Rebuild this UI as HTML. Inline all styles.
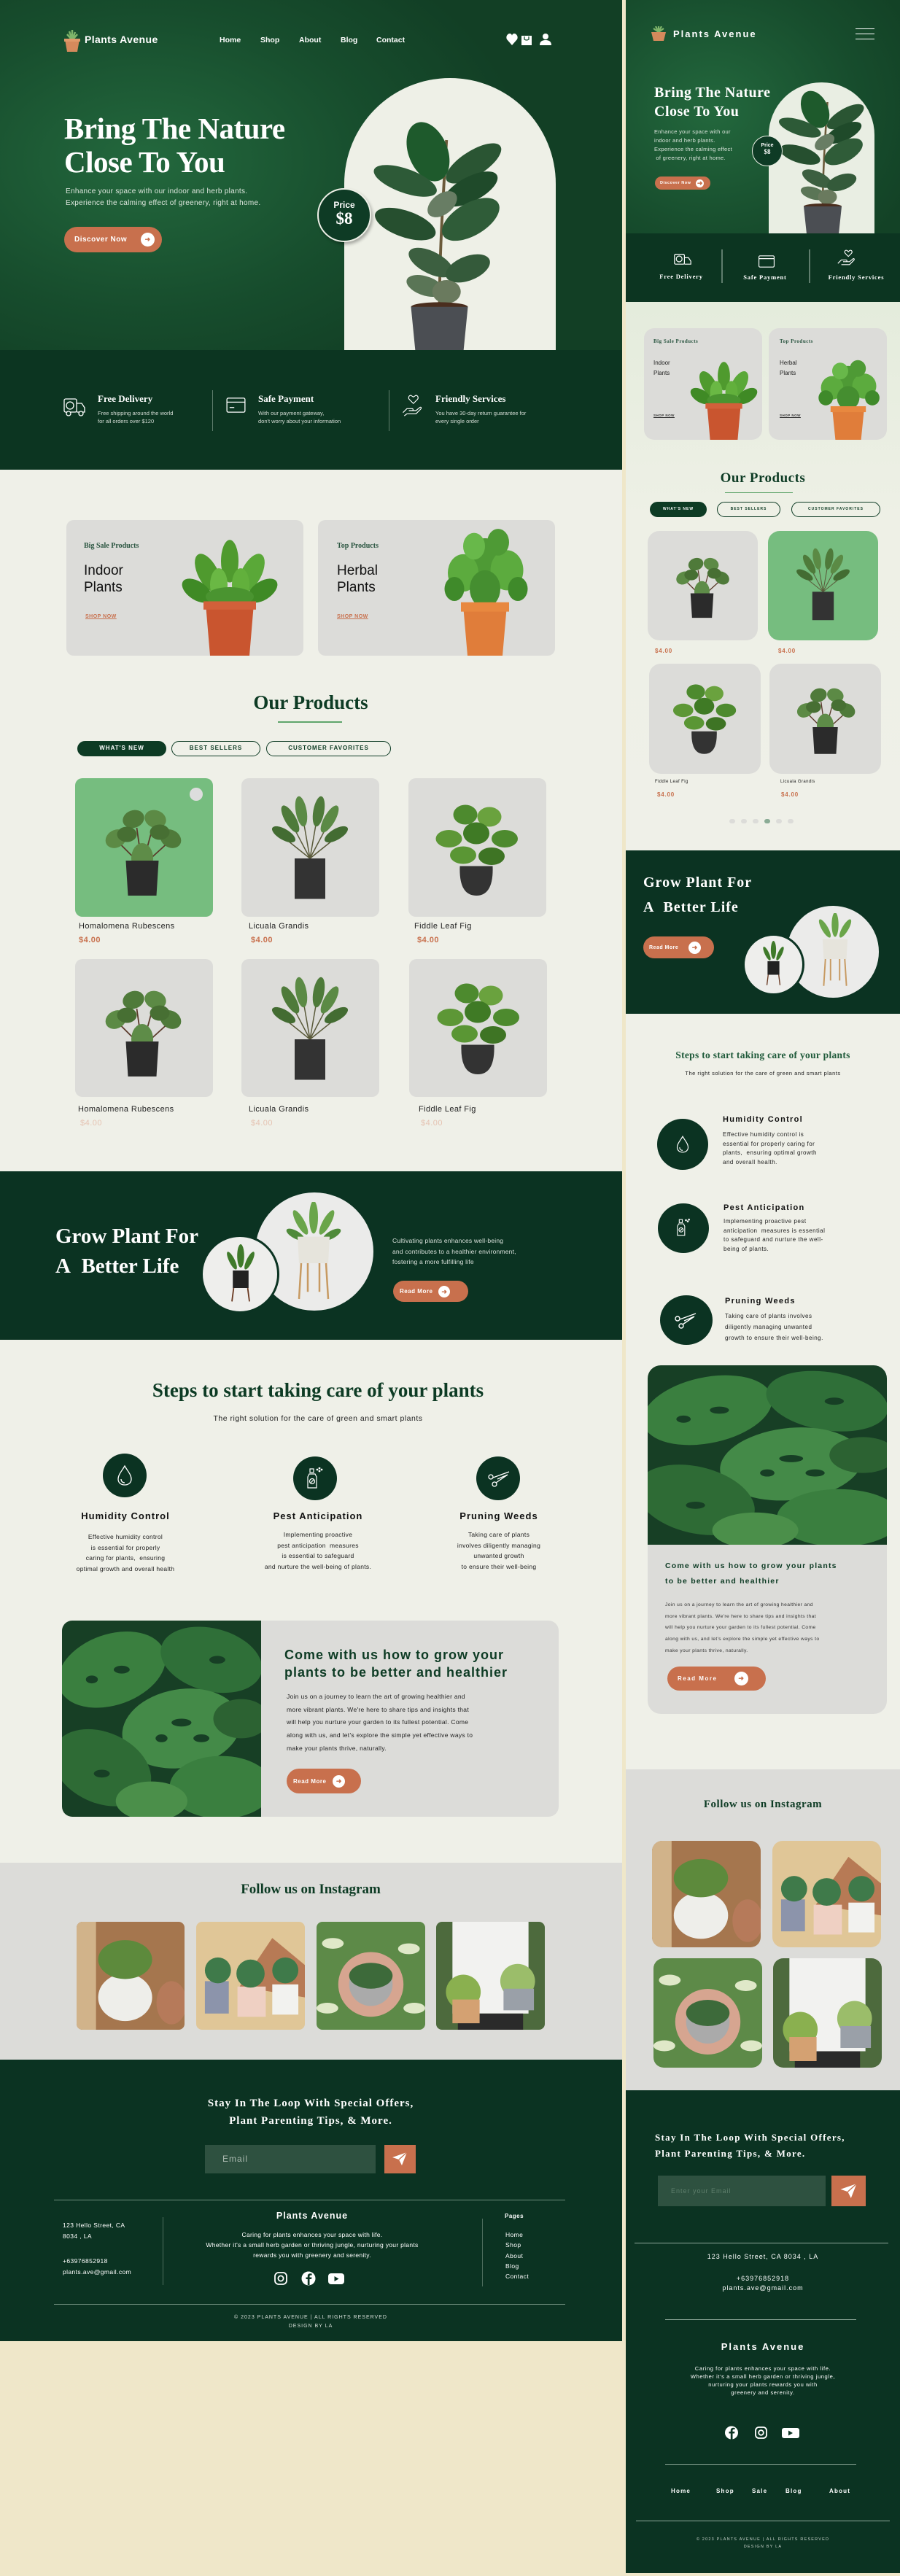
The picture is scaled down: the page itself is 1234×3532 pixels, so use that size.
<!DOCTYPE html>
<html><head><meta charset="utf-8">
<style>
*{margin:0;padding:0;box-sizing:border-box}
body{width:1234px;height:3532px;position:relative;background:#efe7c9;font-family:"Liberation Sans",sans-serif;overflow:hidden}
.a{position:absolute}
.s{font-family:"Liberation Serif",serif;font-weight:bold}
.w{color:#fff}
.c{text-align:center}
.btn{position:absolute;background:#c8704d;border-radius:30px;color:#fff;font-weight:bold;display:flex;align-items:center;letter-spacing:.5px}
.arr{display:inline-block;background:#fff;border-radius:50%;position:relative}
.arr:after{content:"➜";position:absolute;left:0;right:0;top:0;bottom:0;color:#c8704d;text-align:center;font-size:9px;line-height:inherit}
.card{position:absolute;background:#dcdcd9;border-radius:10px;overflow:hidden}
.pill{position:absolute;border:1.5px solid #0d3b24;border-radius:12px;font-size:8px;letter-spacing:1px;text-align:center;color:#0d3b24;font-weight:bold}
.dark{background:#0b3322}
.hr{position:absolute;height:1px;background:#6e8d7c}
</style></head><body>
<svg width="0" height="0" style="position:absolute">
<defs>
<symbol id="ficus" viewBox="0 0 100 200">
<path d="M50 170 C50 120 52 80 55 20" stroke="#6b5a3a" stroke-width="2" fill="none"/>
<g fill="#1f4a2a">
<ellipse cx="42" cy="30" rx="14" ry="26" transform="rotate(-15 42 30)" fill="#1e5a2c"/>
<ellipse cx="74" cy="40" rx="10" ry="24" transform="rotate(50 74 40)" fill="#2a5533"/>
<ellipse cx="26" cy="55" rx="10" ry="24" transform="rotate(-65 26 55)" fill="#2d5a37"/>
<ellipse cx="72" cy="62" rx="10" ry="22" transform="rotate(55 72 62)"/>
<ellipse cx="26" cy="92" rx="11" ry="23" transform="rotate(-65 26 92)" fill="#264f2f"/>
<ellipse cx="72" cy="88" rx="13" ry="24" transform="rotate(50 72 88)" fill="#2f5c38"/>
<ellipse cx="44" cy="125" rx="9" ry="18" transform="rotate(-55 44 125)" fill="#3c5f40"/>
<ellipse cx="70" cy="130" rx="10" ry="17" transform="rotate(60 70 130)" fill="#345a3a"/>
<ellipse cx="40" cy="145" rx="8" ry="14" transform="rotate(-65 40 145)" fill="#5a7556"/>
<ellipse cx="55" cy="150" rx="10" ry="10" fill="#6a7a5e"/>
<ellipse cx="52" cy="75" rx="8" ry="13" transform="rotate(40 52 75)" fill="#687d64"/>
</g>
<ellipse cx="50" cy="163" rx="20" ry="4" fill="#4a2e1e"/>
<path d="M30 163 L70 163 L67 200 L33 200Z" fill="#4b4e53"/>
</symbol>
<symbol id="jade" viewBox="0 0 100 100">
<g fill="#4f9a2e">
<ellipse cx="30" cy="30" rx="9" ry="18" transform="rotate(-30 30 30)"/>
<ellipse cx="50" cy="20" rx="8" ry="18"/>
<ellipse cx="70" cy="30" rx="9" ry="18" transform="rotate(30 70 30)" fill="#5aa838"/>
<ellipse cx="20" cy="45" rx="8" ry="15" transform="rotate(-60 20 45)" fill="#3f8a25"/>
<ellipse cx="80" cy="45" rx="8" ry="15" transform="rotate(60 80 45)" fill="#3f8a25"/>
<ellipse cx="40" cy="40" rx="8" ry="14" fill="#6ab844"/>
<ellipse cx="60" cy="40" rx="8" ry="14" fill="#62b03c"/>
<ellipse cx="50" cy="50" rx="22" ry="8" fill="#4a9430"/>
</g>
<path d="M28 56 L72 56 L68 100 L32 100Z" fill="#c9552f"/>
<rect x="26" y="54" width="48" height="7" fill="#d2603a"/>
</symbol>
<symbol id="herb" viewBox="0 0 100 100">
<g fill="#4e9a35">
<circle cx="50" cy="30" r="18"/><circle cx="30" cy="38" r="14" fill="#5cab3e"/><circle cx="70" cy="36" r="15" fill="#5cab3e"/>
<circle cx="40" cy="18" r="10" fill="#68b84a"/><circle cx="62" cy="15" r="10"/><circle cx="22" cy="50" r="9" fill="#3f8a2a"/><circle cx="80" cy="50" r="9" fill="#3f8a2a"/>
<circle cx="50" cy="50" r="14" fill="#458e30"/>
</g>
<path d="M30 62 L70 62 L66 100 L34 100Z" fill="#e07d3a"/>
<rect x="28" y="60" width="44" height="7" fill="#e8883f"/>
</symbol>
<symbol id="homal" viewBox="0 0 100 100">
<path d="M50 65 L45 30 M50 65 L60 28 M50 65 L30 45 M50 65 L72 45" stroke="#5a3a2a" stroke-width="1.2"/>
<g fill="#4f7a3a">
<ellipse cx="42" cy="22" rx="10" ry="8" transform="rotate(-20 42 22)"/>
<ellipse cx="62" cy="22" rx="10" ry="8" transform="rotate(20 62 22)" fill="#5c8a45"/>
<ellipse cx="26" cy="40" rx="10" ry="8" transform="rotate(-30 26 40)" fill="#5c8a45"/>
<ellipse cx="76" cy="40" rx="10" ry="8" transform="rotate(30 76 40)"/>
<ellipse cx="36" cy="36" rx="9" ry="7" fill="#476f33"/>
<ellipse cx="50" cy="58" rx="10" ry="14" fill="#5e8c48"/>
<ellipse cx="66" cy="34" rx="9" ry="7" fill="#476f33"/>
</g>
<path d="M35 60 L65 60 L63 92 L37 92Z" fill="#2b2b2b"/>
</symbol>
<symbol id="lic" viewBox="0 0 100 100">
<g stroke="#5a5a3a" stroke-width="1"><path d="M50 58 L30 20 M50 58 L42 12 M50 58 L58 12 M50 58 L70 20 M50 58 L25 38 M50 58 L75 38"/></g>
<g fill="#4e7a3a">
<ellipse cx="32" cy="22" rx="5" ry="14" transform="rotate(-30 32 22)"/>
<ellipse cx="42" cy="15" rx="5" ry="14" transform="rotate(-10 42 15)" fill="#5b8a45"/>
<ellipse cx="58" cy="15" rx="5" ry="14" transform="rotate(10 58 15)"/>
<ellipse cx="68" cy="22" rx="5" ry="14" transform="rotate(30 68 22)" fill="#5b8a45"/>
<ellipse cx="26" cy="36" rx="5" ry="12" transform="rotate(-60 26 36)" fill="#436c32"/>
<ellipse cx="74" cy="36" rx="5" ry="12" transform="rotate(60 74 36)" fill="#436c32"/>
</g>
<path d="M36 58 L64 58 L64 95 L36 95Z" fill="#333"/>
</symbol>
<symbol id="fig" viewBox="0 0 100 100">
<g fill="#4d8a2e">
<ellipse cx="40" cy="18" rx="11" ry="9"/><ellipse cx="62" cy="20" rx="11" ry="9" fill="#6aa23e"/>
<ellipse cx="25" cy="40" rx="12" ry="8" fill="#5d9736"/><ellipse cx="76" cy="40" rx="12" ry="8"/>
<ellipse cx="50" cy="35" rx="12" ry="10" fill="#3f7a25"/><ellipse cx="38" cy="55" rx="12" ry="8" fill="#5a9634"/>
<ellipse cx="64" cy="56" rx="12" ry="8" fill="#3e7424"/>
</g>
<path d="M35 65 L65 65 Q66 92 50 92 Q34 92 35 65Z" fill="#333"/>
</symbol>
<symbol id="mon" viewBox="0 0 100 100" preserveAspectRatio="none">
<rect width="100" height="100" fill="#173f25"/>
<g fill="#3a7f3f"><ellipse cx="25" cy="25" rx="28" ry="18" transform="rotate(-20 25 25)"/><ellipse cx="75" cy="20" rx="26" ry="16" transform="rotate(15 75 20)" fill="#2f6f38"/>
<ellipse cx="60" cy="55" rx="30" ry="20" transform="rotate(-10 60 55)" fill="#448a48"/><ellipse cx="20" cy="75" rx="26" ry="18" transform="rotate(25 20 75)" fill="#2e6b35"/>
<ellipse cx="80" cy="85" rx="26" ry="16" fill="#3a7f3f"/><ellipse cx="45" cy="92" rx="18" ry="10" fill="#4b8f4a"/><ellipse cx="90" cy="50" rx="14" ry="10" fill="#2c6232"/></g>
<g fill="#173f25"><ellipse cx="30" cy="25" rx="4" ry="2"/><ellipse cx="60" cy="52" rx="5" ry="2"/><ellipse cx="70" cy="60" rx="4" ry="2"/><ellipse cx="20" cy="78" rx="4" ry="2"/><ellipse cx="78" cy="20" rx="4" ry="2"/><ellipse cx="15" cy="30" rx="3" ry="2"/><ellipse cx="50" cy="60" rx="3" ry="2"/></g>
</symbol>
<symbol id="ig1" viewBox="0 0 100 100" preserveAspectRatio="none"><rect width="100" height="100" fill="#a5764e"/><rect x="0" y="0" width="18" height="100" fill="#d1b38a"/><ellipse cx="45" cy="70" rx="25" ry="22" fill="#eeeeea"/><ellipse cx="45" cy="35" rx="25" ry="18" fill="#5d8a3c"/><ellipse cx="88" cy="75" rx="14" ry="20" fill="#b67a5a"/></symbol>
<symbol id="ig2" viewBox="0 0 100 100" preserveAspectRatio="none"><rect width="100" height="100" fill="#e0c697"/><path d="M40 60 L70 15 L100 40 L100 70Z" fill="#b77a55"/><rect x="8" y="55" width="22" height="30" fill="#8c94ab"/><rect x="38" y="60" width="26" height="28" fill="#efd0c3"/><rect x="70" y="58" width="24" height="28" fill="#f2f2ef"/><g fill="#3f7a4a"><circle cx="20" cy="45" r="12"/><circle cx="50" cy="48" r="13"/><circle cx="82" cy="45" r="12"/></g></symbol>
<symbol id="ig3" viewBox="0 0 100 100" preserveAspectRatio="none"><rect width="100" height="100" fill="#5d8a48"/><g fill="#dfe8c8"><ellipse cx="15" cy="20" rx="10" ry="5"/><ellipse cx="85" cy="25" rx="10" ry="5"/><ellipse cx="10" cy="80" rx="10" ry="5"/><ellipse cx="90" cy="80" rx="10" ry="5"/></g><circle cx="50" cy="58" r="30" fill="#d6a590"/><circle cx="50" cy="58" r="20" fill="#aaa"/><ellipse cx="50" cy="50" rx="20" ry="12" fill="#3d6a3a"/></symbol>
<symbol id="ig4" viewBox="0 0 100 100" preserveAspectRatio="none"><rect width="100" height="100" fill="#4d6a3d"/><rect x="15" y="0" width="70" height="85" fill="#f2f2f0"/><rect x="20" y="85" width="60" height="15" fill="#2a2a2a"/><circle cx="25" cy="65" r="16" fill="#8ab04f"/><rect x="15" y="72" width="25" height="22" fill="#d4a172"/><circle cx="75" cy="55" r="16" fill="#9bbd6a"/><rect x="62" y="62" width="28" height="20" fill="#9aa0a8"/></symbol>
</defs></svg>

<!-- ============ DESKTOP ============ -->
<div class="a" style="left:0;top:0;width:853px;height:480px;background:radial-gradient(ellipse 520px 340px at 200px 220px,#23683d,#174d2d 60%,#123f25)"></div>
<svg class="a" style="left:87px;top:41px" width="24" height="30" viewBox="0 0 24 30"><path d="M12 14 L8 2 M12 14 L12 0 M12 14 L16 3 M12 14 L5 6 M12 14 L19 6" stroke="#7fb56a" stroke-width="2.5"/><path d="M2 13 L22 13 L19 30 L5 30Z" fill="#d58a5c"/><rect x="1" y="12" width="22" height="4" fill="#e09a6a"/></svg>
<div class="a w" style="left:116px;top:46px;font-size:14px;font-weight:bold;letter-spacing:.4px">Plants Avenue</div>
<div class="a w" style="left:301px;top:49px;font-size:10.5px;font-weight:bold">Home</div>
<div class="a w" style="left:357px;top:49px;font-size:10.5px;font-weight:bold">Shop</div>
<div class="a w" style="left:410px;top:49px;font-size:10.5px;font-weight:bold">About</div>
<div class="a w" style="left:467px;top:49px;font-size:10.5px;font-weight:bold">Blog</div>
<div class="a w" style="left:516px;top:49px;font-size:10.5px;font-weight:bold">Contact</div>
<svg class="a" style="left:694px;top:45px" width="64" height="18" viewBox="0 0 64 18"><path d="M8 17 L1 9 C-1 5 2 1 5 1 C7 1 8 3 8 4 C8 3 9 1 11 1 C14 1 17 5 15 9Z" fill="#fff"/><path d="M21 4 L35 4 L35 17 L21 17Z" fill="#fff"/><path d="M25 5 L25 9 Q28 11 31 9 L31 5" stroke="#174d2d" fill="none" stroke-width="1.3"/><circle cx="54" cy="5" r="4" fill="#fff"/><path d="M46 17 Q46 10 54 10 Q62 10 62 17Z" fill="#fff"/></svg>
<div class="a s w" style="left:88px;top:153px;font-size:41px;line-height:46px;letter-spacing:-.5px">Bring The Nature<br>Close To You</div>
<div class="a" style="left:90px;top:255px;font-size:10px;line-height:15.5px;color:#dfe8df;letter-spacing:.3px">Enhance your space with our indoor and herb plants.<br>Experience the calming effect of greenery, right at home.</div>
<div class="btn" style="left:88px;top:311px;width:134px;height:35px;font-size:10px;padding-left:14px">Discover Now <span class="arr" style="width:19px;height:19px;margin-left:19px;line-height:19px"></span></div>
<div class="a" style="left:472px;top:107px;width:290px;height:373px;background:#eef0e7;border-radius:145px 145px 0 0"></div>
<svg class="a" style="left:505px;top:160px" width="195" height="320" viewBox="0 0 100 200" preserveAspectRatio="none"><use href="#ficus"/></svg>
<div class="a w c" style="left:435px;top:258px;width:74px;height:74px;border-radius:50%;background:#0e3b25;border:2px solid #eef0e7;box-shadow:2px 3px 4px rgba(0,0,0,.3)"><div style="font-size:12px;font-weight:bold;margin-top:14px">Price</div><div class="s" style="font-size:23px;line-height:24px">$8</div></div>
<!-- features -->
<div class="a" style="left:0;top:480px;width:853px;height:164px;background:#0c3521"></div>
<svg class="a" style="left:87px;top:544px" width="30" height="28" viewBox="0 0 30 28" fill="none" stroke="#fff" stroke-width="1.3"><rect x="1" y="3" width="17" height="18" rx="2"/><circle cx="9" cy="12" r="5"/><path d="M18 9 L25 9 L29 15 L29 21 L18 21"/><circle cx="7" cy="23" r="3" fill="#0c3521"/><circle cx="24" cy="23" r="3" fill="#0c3521"/></svg>
<div class="a s w" style="left:134px;top:539px;font-size:13px">Free Delivery</div>
<div class="a" style="left:134px;top:561px;font-size:7.5px;line-height:11px;color:#d5ddd6">Free shipping around the world<br>for all orders over $120</div>
<div class="a" style="left:291px;top:535px;width:1px;height:56px;background:#5f7d6d"></div>
<svg class="a" style="left:309px;top:545px" width="29" height="22" viewBox="0 0 29 24" fill="none" stroke="#fff" stroke-width="1.4"><rect x="1" y="1" width="27" height="21" rx="2"/><path d="M1 7 L28 7 M5 15 L12 15"/></svg>
<div class="a s w" style="left:354px;top:539px;font-size:13px">Safe Payment</div>
<div class="a" style="left:354px;top:561px;font-size:7.5px;line-height:11px;color:#d5ddd6">With our payment gateway,<br>don't worry about your information</div>
<div class="a" style="left:533px;top:535px;width:1px;height:56px;background:#5f7d6d"></div>
<svg class="a" style="left:549px;top:539px" width="32" height="32" viewBox="0 0 32 36" fill="none" stroke="#fff" stroke-width="1.3"><path d="M18 16 L12 10 C9 7 12 2 15 4 L18 6 L21 4 C24 2 27 7 24 10Z"/><path d="M2 30 L8 24 L16 24 C18 24 18 27 16 27 L11 27 M14 27 L22 27 L28 22 C30 21 31 23 29 25 L22 32 L8 32 L4 35"/></svg>
<div class="a s w" style="left:597px;top:539px;font-size:13px">Friendly Services</div>
<div class="a" style="left:597px;top:561px;font-size:7.5px;line-height:11px;color:#d5ddd6">You have 30-day return guarantee for<br>every single order</div>
<!-- cream -->
<div class="a" style="left:0;top:644px;width:853px;height:1910px;background:#eff0e8"></div>
<!-- promo -->
<div class="card" style="left:91px;top:713px;width:325px;height:186px"></div>
<div class="a s" style="left:115px;top:743px;font-size:10px;color:#2a5540">Big Sale Products</div>
<div class="a" style="left:115px;top:771px;font-size:19px;line-height:23px;color:#111">Indoor<br>Plants</div>
<div class="a" style="left:117px;top:842px;font-size:7px;color:#c8704d;text-decoration:underline;letter-spacing:.5px;font-weight:bold">SHOP NOW</div>
<svg class="a" style="left:240px;top:737px" width="150" height="162" viewBox="0 0 100 100" preserveAspectRatio="none"><use href="#jade"/></svg>
<div class="card" style="left:436px;top:713px;width:325px;height:186px"></div>
<div class="a s" style="left:462px;top:743px;font-size:10px;color:#2a5540">Top Products</div>
<div class="a" style="left:462px;top:771px;font-size:19px;line-height:23px;color:#111">Herbal<br>Plants</div>
<div class="a" style="left:462px;top:842px;font-size:7px;color:#c8704d;text-decoration:underline;letter-spacing:.5px;font-weight:bold">SHOP NOW</div>
<svg class="a" style="left:590px;top:716px" width="150" height="183" viewBox="0 0 100 100" preserveAspectRatio="none"><use href="#herb"/></svg>
<!-- our products -->
<div class="a s c" style="left:226px;top:948px;width:400px;font-size:27px;color:#0d3b24">Our Products</div>
<div class="a" style="left:381px;top:989px;width:88px;height:2px;background:#5fa56b"></div>
<div class="pill" style="left:106px;top:1016px;width:122px;height:21px;line-height:18px;background:#0d3b24;color:#fff">WHAT'S NEW</div>
<div class="pill" style="left:235px;top:1016px;width:122px;height:21px;line-height:18px">BEST SELLERS</div>
<div class="pill" style="left:365px;top:1016px;width:171px;height:21px;line-height:18px">CUSTOMER FAVORITES</div>
<div class="card" style="left:103px;top:1067px;width:189px;height:190px;background:#76bd7f"></div>
<div class="a" style="left:260px;top:1080px;width:18px;height:18px;border-radius:50%;background:#ddd"></div>
<svg class="a" style="left:120px;top:1080px" width="150" height="170" viewBox="0 0 100 100"><use href="#homal"/></svg>
<div class="card" style="left:331px;top:1067px;width:189px;height:190px"></div>
<svg class="a" style="left:350px;top:1080px" width="150" height="170" viewBox="0 0 100 100"><use href="#lic"/></svg>
<div class="card" style="left:560px;top:1067px;width:189px;height:190px"></div>
<svg class="a" style="left:578px;top:1080px" width="150" height="170" viewBox="0 0 100 100"><use href="#fig"/></svg>
<div class="a" style="left:108px;top:1264px;font-size:11px;color:#222;letter-spacing:.4px">Homalomena Rubescens</div>
<div class="a" style="left:108px;top:1283px;font-size:11px;color:#c8704d;font-weight:bold;letter-spacing:.5px">$4.00</div>
<div class="a" style="left:341px;top:1264px;font-size:11px;color:#222;letter-spacing:.4px">Licuala Grandis</div>
<div class="a" style="left:344px;top:1283px;font-size:11px;color:#c8704d;font-weight:bold;letter-spacing:.5px">$4.00</div>
<div class="a" style="left:568px;top:1264px;font-size:11px;color:#222;letter-spacing:.4px">Fiddle Leaf Fig</div>
<div class="a" style="left:572px;top:1283px;font-size:11px;color:#c8704d;font-weight:bold;letter-spacing:.5px">$4.00</div>
<div class="card" style="left:103px;top:1315px;width:189px;height:189px"></div>
<svg class="a" style="left:120px;top:1328px" width="150" height="170" viewBox="0 0 100 100"><use href="#homal"/></svg>
<div class="card" style="left:331px;top:1315px;width:189px;height:189px"></div>
<svg class="a" style="left:350px;top:1328px" width="150" height="170" viewBox="0 0 100 100"><use href="#lic"/></svg>
<div class="card" style="left:561px;top:1315px;width:189px;height:189px"></div>
<svg class="a" style="left:580px;top:1325px" width="150" height="170" viewBox="0 0 100 100"><use href="#fig"/></svg>
<div class="a" style="left:107px;top:1515px;font-size:11px;color:#222;letter-spacing:.4px">Homalomena Rubescens</div>
<div class="a" style="left:110px;top:1534px;font-size:11px;color:#e5c3b2;letter-spacing:.5px">$4.00</div>
<div class="a" style="left:341px;top:1515px;font-size:11px;color:#222;letter-spacing:.4px">Licuala Grandis</div>
<div class="a" style="left:344px;top:1534px;font-size:11px;color:#e5c3b2;letter-spacing:.5px">$4.00</div>
<div class="a" style="left:574px;top:1515px;font-size:11px;color:#222;letter-spacing:.4px">Fiddle Leaf Fig</div>
<div class="a" style="left:577px;top:1534px;font-size:11px;color:#e5c3b2;letter-spacing:.5px">$4.00</div>
<!-- grow band -->
<div class="a dark" style="left:0;top:1606px;width:853px;height:231px"></div>
<div class="a s w" style="left:76px;top:1675px;font-size:29px;line-height:41px">Grow Plant For<br>A&nbsp; Better Life</div>
<div class="a" style="left:348px;top:1633px;width:166px;height:166px;border-radius:50%;background:#ebebea;border:2px solid #0b3322"></div>
<svg class="a" style="left:380px;top:1648px" width="100" height="140" viewBox="0 0 100 100" preserveAspectRatio="none"><g fill="#6aa54a"><ellipse cx="50" cy="15" rx="6" ry="16"/><ellipse cx="32" cy="20" rx="5" ry="15" transform="rotate(-40 32 20)"/><ellipse cx="68" cy="20" rx="5" ry="15" transform="rotate(40 68 20)"/><ellipse cx="25" cy="32" rx="4" ry="13" transform="rotate(-70 25 32)" fill="#4f8a3a"/><ellipse cx="75" cy="32" rx="4" ry="13" transform="rotate(70 75 32)" fill="#4f8a3a"/></g><path d="M28 34 L72 34 L70 60 L30 60Z" fill="#e6e4dc"/><path d="M33 60 L30 95 M67 60 L70 95 M42 60 L42 88 M58 60 L58 88" stroke="#c79a62" stroke-width="2.5"/></svg>
<div class="a" style="left:275px;top:1693px;width:108px;height:108px;border-radius:50%;background:#eeeeec;border:3px solid #0b3322"></div>
<svg class="a" style="left:300px;top:1706px" width="60" height="80" viewBox="0 0 100 100" preserveAspectRatio="none"><g fill="#3f7a2a"><ellipse cx="50" cy="20" rx="8" ry="20"/><ellipse cx="30" cy="28" rx="6" ry="18" transform="rotate(-35 30 28)"/><ellipse cx="70" cy="28" rx="6" ry="18" transform="rotate(35 70 28)"/></g><rect x="32" y="45" width="36" height="30" fill="#222"/><path d="M34 75 L30 98 M66 75 L70 98" stroke="#6a3a22" stroke-width="3"/></svg>
<div class="a" style="left:538px;top:1694px;font-size:8.5px;line-height:14.5px;color:#d8e0da;letter-spacing:.2px">Cultivating plants enhances well-being<br>and contributes to a healthier environment,<br>fostering a more fulfilling life</div>
<div class="btn" style="left:539px;top:1756px;width:103px;height:29px;font-size:8px;padding-left:9px">Read More <span class="arr" style="width:16px;height:16px;margin-left:8px;line-height:16px"></span></div>
<!-- steps -->
<div class="a s c" style="left:100px;top:1891px;width:672px;font-size:27px;color:#0d3b24">Steps to start taking care of your plants</div>
<div class="a c" style="left:200px;top:1939px;width:472px;font-size:10.5px;color:#222;letter-spacing:.5px">The right solution for the care of green and smart plants</div>
<div class="a" style="left:141px;top:1993px;width:60px;height:60px;border-radius:50%;background:#0b3322"></div>
<svg class="a" style="left:159px;top:2008px" width="24" height="30" viewBox="0 0 24 30" fill="none" stroke="#fff" stroke-width="1.3"><path d="M12 2 C8 9 3 14 3 20 C3 25 7 28 12 28 C17 28 21 25 21 20 C21 14 16 9 12 2Z"/><path d="M7 20 C7 23 9 25 12 25"/></svg>
<div class="a" style="left:402px;top:1997px;width:60px;height:60px;border-radius:50%;background:#0b3322"></div>
<svg class="a" style="left:421px;top:2012px" width="24" height="30" viewBox="0 0 24 30" fill="none" stroke="#fff" stroke-width="1.2"><rect x="4" y="2" width="5" height="5"/><path d="M3 9 L11 9 L13 13 L13 28 L1 28 L1 13Z"/><circle cx="7" cy="19" r="3.5"/><path d="M5 21 L9 17"/><circle cx="14" cy="3" r=".8" fill="#fff"/><circle cx="17" cy="5" r=".8" fill="#fff"/><circle cx="17" cy="1" r=".8" fill="#fff"/><circle cx="20" cy="3" r=".8" fill="#fff"/></svg>
<div class="a" style="left:653px;top:1997px;width:60px;height:60px;border-radius:50%;background:#0b3322"></div>
<svg class="a" style="left:668px;top:2014px" width="32" height="26" viewBox="0 0 32 26" fill="none" stroke="#fff" stroke-width="1.3"><circle cx="5" cy="11" r="3"/><circle cx="10" cy="21" r="3"/><path d="M8 12 L30 4 M12 19 L28 8 L14 14"/></svg>
<div class="a c" style="left:60px;top:2071px;width:224px;font-size:13px;font-weight:bold;letter-spacing:1px;color:#111">Humidity Control</div>
<div class="a c" style="left:60px;top:2100px;width:224px;font-size:8.5px;line-height:14.7px;color:#222;letter-spacing:.3px">Effective humidity control<br>is essential for properly<br>caring for plants,&nbsp; ensuring<br>optimal growth and overall health</div>
<div class="a c" style="left:320px;top:2071px;width:232px;font-size:13px;font-weight:bold;letter-spacing:1px;color:#111">Pest Anticipation</div>
<div class="a c" style="left:320px;top:2097px;width:232px;font-size:8.5px;line-height:14.7px;color:#222;letter-spacing:.3px">Implementing proactive<br>pest anticipation&nbsp; measures<br>is essential to safeguard<br>and nurture the well-being of plants.</div>
<div class="a c" style="left:570px;top:2071px;width:228px;font-size:13px;font-weight:bold;letter-spacing:1px;color:#111">Pruning Weeds</div>
<div class="a c" style="left:570px;top:2097px;width:228px;font-size:8.5px;line-height:14.7px;color:#222;letter-spacing:.3px">Taking care of plants<br>involves diligently managing<br>unwanted growth<br>to ensure their well-being</div>
<!-- come card -->
<div class="card" style="left:85px;top:2222px;width:681px;height:269px;border-radius:14px"></div>
<svg class="a" style="left:85px;top:2222px;border-radius:14px 0 0 14px" width="273" height="269"><use href="#mon" width="273" height="269"/></svg>
<div class="a" style="left:390px;top:2257px;font-size:18px;line-height:24px;font-weight:bold;color:#0d3b24;letter-spacing:1px">Come with us how to grow your<br>plants to be better and healthier</div>
<div class="a" style="left:393px;top:2318px;font-size:8.5px;line-height:17.7px;color:#222;letter-spacing:.3px">Join us on a journey to learn the art of growing healthier and<br>more vibrant plants. We're here to share tips and insights that<br>will help you nurture your garden to its fullest potential. Come<br>along with us, and let's explore the simple yet effective ways to<br>make your plants thrive, naturally.</div>
<div class="btn" style="left:393px;top:2425px;width:102px;height:34px;font-size:8px;padding-left:9px">Read More <span class="arr" style="width:17px;height:17px;margin-left:9px;line-height:17px"></span></div>
<!-- instagram -->
<div class="a" style="left:0;top:2554px;width:853px;height:270px;background:#dcdcd9"></div>
<div class="a s c" style="left:226px;top:2580px;width:400px;font-size:19px;color:#0d3b24">Follow us on Instagram</div>
<svg class="a" style="left:105px;top:2635px;border-radius:8px" width="148" height="148"><use href="#ig1" width="148" height="148"/></svg>
<svg class="a" style="left:269px;top:2635px;border-radius:8px" width="149" height="148"><use href="#ig2" width="149" height="148"/></svg>
<svg class="a" style="left:434px;top:2635px;border-radius:8px" width="149" height="148"><use href="#ig3" width="149" height="148"/></svg>
<svg class="a" style="left:598px;top:2635px;border-radius:8px" width="149" height="148"><use href="#ig4" width="149" height="148"/></svg>
<!-- footer -->
<div class="a dark" style="left:0;top:2824px;width:853px;height:386px"></div>
<div class="a s w c" style="left:176px;top:2872px;width:500px;font-size:15px;line-height:24px;letter-spacing:1px">Stay In The Loop With Special Offers,<br>Plant Parenting Tips, &amp; More.</div>
<div class="a" style="left:281px;top:2941px;width:234px;height:39px;background:#2e5140;color:#a9b8ae;font-size:12px;line-height:39px;padding-left:24px;letter-spacing:1px">Email</div>
<div class="a" style="left:527px;top:2941px;width:43px;height:39px;background:#c8704d"></div>
<svg class="a" style="left:537px;top:2950px" width="22" height="20" viewBox="0 0 22 20"><path d="M1 8 L21 1 L14 19 L10 11Z" fill="#fff"/><path d="M10 11 L21 1" stroke="#c8704d" stroke-width="1.3"/></svg>
<div class="hr" style="left:74px;top:3016px;width:701px"></div>
<div class="a w" style="left:86px;top:3044px;font-size:8.5px;line-height:14.5px;letter-spacing:.4px">123 Hello Street, CA<br>8034 , LA</div>
<div class="a w" style="left:86px;top:3093px;font-size:8.5px;line-height:14.5px;letter-spacing:.4px">+63976852918<br>plants.ave@gmail.com</div>
<div class="a" style="left:223px;top:3040px;width:1px;height:93px;background:#4e6e5e"></div>
<div class="a" style="left:661px;top:3042px;width:1px;height:93px;background:#4e6e5e"></div>
<div class="a w c" style="left:278px;top:3031px;width:300px;font-size:12.5px;font-weight:bold;letter-spacing:1px">Plants Avenue</div>
<div class="a w c" style="left:218px;top:3057px;width:420px;font-size:8.5px;line-height:14px;letter-spacing:.3px">Caring for plants enhances your space with life.<br>Whether it's a small herb garden or thriving jungle, nurturing your plants<br>rewards you with greenery and serenity.</div>
<svg class="a" style="left:375px;top:3114px" width="98" height="20" viewBox="0 0 98 20"><rect x="2" y="2" width="16" height="16" rx="5" fill="none" stroke="#fff" stroke-width="1.8"/><circle cx="10" cy="10" r="3.6" fill="none" stroke="#fff" stroke-width="1.8"/><circle cx="48" cy="10" r="9.5" fill="#fff"/><path d="M49.5 19 L49.5 11 L52 11 L52.5 8.5 L49.5 8.5 L49.5 7 C49.5 6 50 5.6 51 5.6 L52.6 5.6 L52.6 3.5 C51.8 3.4 51 3.3 50.3 3.3 C48 3.3 46.8 4.7 46.8 7 L46.8 8.5 L44.5 8.5 L44.5 11 L46.8 11 L46.8 19Z" fill="#0b3322"/><rect x="75" y="3" width="22" height="15" rx="4" fill="#fff"/><path d="M83.5 7 L83.5 14 L89.5 10.5Z" fill="#0b3322"/></svg>
<div class="a w" style="left:692px;top:3034px;font-size:8px;font-weight:bold;letter-spacing:.5px">Pages</div>
<div class="a w" style="left:693px;top:3057px;font-size:8.5px;line-height:14.3px;letter-spacing:.4px">Home<br>Shop<br>About<br>Blog<br>Contact</div>
<div class="hr" style="left:74px;top:3159px;width:701px"></div>
<div class="a c" style="left:226px;top:3172px;width:400px;font-size:7px;line-height:12px;color:#d6ded8;letter-spacing:1px">© 2023 PLANTS AVENUE | ALL RIGHTS RESERVED<br>DESIGN BY LA</div>

<!-- ============ MOBILE ============ -->
<div class="a" style="left:858px;top:0;width:376px;height:3528px;background:#eff0e8;overflow:hidden">
<div class="a" style="left:0;top:414px;width:376px;height:752px;background:linear-gradient(180deg,#e4ecdc,#eef0e6 40%,#eff0e8)"></div>
<div class="a" style="left:0;top:0;width:376px;height:320px;background:radial-gradient(ellipse 300px 260px at 120px 150px,#23683d,#174d2d 65%,#134226)"></div>
<svg class="a" style="left:32px;top:36px" width="26" height="20" viewBox="0 0 26 20"><path d="M13 8 L9 0 M13 8 L13 0 M13 8 L17 0 M13 8 L6 3 M13 8 L20 3" stroke="#7fb56a" stroke-width="2.2"/><path d="M3 8 L23 8 L20 20 L6 20Z" fill="#d58a5c"/></svg>
<div class="a w" style="left:65px;top:39px;font-size:13px;font-weight:bold;letter-spacing:2px">Plants Avenue</div>
<div class="a" style="left:315px;top:39px;width:26px;height:1px;background:#fff"></div>
<div class="a" style="left:315px;top:46px;width:26px;height:1px;background:#fff"></div>
<div class="a" style="left:315px;top:53px;width:26px;height:1px;background:#fff"></div>
<div class="a s w" style="left:39px;top:114px;font-size:20px;line-height:26px;letter-spacing:.5px">Bring The Nature<br>Close To You</div>
<div class="a" style="left:39px;top:175px;font-size:7.5px;line-height:12px;color:#dbe5dc;letter-spacing:.3px">Enhance your space with our<br>indoor and herb plants.<br>Experience the calming effect<br>&nbsp;of greenery, right at home.</div>
<div class="btn" style="left:40px;top:242px;width:76px;height:18px;font-size:5.5px;padding-left:7px">Discover Now <span class="arr" style="width:11px;height:11px;margin-left:7px;line-height:11px;font-size:0"></span></div>
<div class="a" style="left:196px;top:113px;width:145px;height:207px;background:#e9eee3;border-radius:72px 72px 0 0"></div>
<svg class="a" style="left:205px;top:120px" width="130" height="200" viewBox="0 0 100 200" preserveAspectRatio="none"><use href="#ficus"/></svg>
<div class="a w c" style="left:173px;top:186px;width:42px;height:42px;border-radius:50%;background:#0e3b25;border:1.5px solid #e9eee3"><div style="font-size:7px;font-weight:bold;margin-top:9px">Price</div><div class="s" style="font-size:9px">$8</div></div>
<div class="a" style="left:0;top:320px;width:376px;height:94px;background:#0c3521"></div>
<svg class="a" style="left:66px;top:347px" width="24" height="20" viewBox="0 0 30 25" fill="none" stroke="#fff" stroke-width="1.5"><rect x="1" y="2" width="17" height="17" rx="2"/><circle cx="9" cy="10" r="5"/><path d="M18 8 L25 8 L29 14 L29 19 L18 19"/></svg>
<div class="a s w c" style="left:16px;top:374px;width:120px;font-size:8.5px;letter-spacing:.8px">Free Delivery</div>
<div class="a" style="left:131px;top:342px;width:1.5px;height:46px;background:#5f7d6d"></div>
<svg class="a" style="left:181px;top:350px" width="24" height="17" viewBox="0 0 29 22" fill="none" stroke="#fff" stroke-width="1.5"><rect x="1" y="1" width="27" height="20" rx="2"/><path d="M1 6 L28 6"/></svg>
<div class="a s w c" style="left:131px;top:375px;width:120px;font-size:8.5px;letter-spacing:.8px">Safe Payment</div>
<div class="a" style="left:251px;top:342px;width:1.5px;height:46px;background:#5f7d6d"></div>
<svg class="a" style="left:288px;top:342px" width="28" height="24" viewBox="0 0 32 30" fill="none" stroke="#fff" stroke-width="1.4"><path d="M20 12 L15 7 C12 4 15 0 18 2 L20 4 L22 2 C25 0 28 4 25 7Z"/><path d="M2 24 L8 18 L16 18 C18 18 18 21 16 21 L11 21 M14 21 L22 21 L28 16 C30 15 31 17 29 19 L22 26 L8 26"/></svg>
<div class="a s w c" style="left:256px;top:375px;width:120px;font-size:8.5px;letter-spacing:.8px">Friendly Services</div>
<div class="card" style="left:25px;top:450px;width:162px;height:153px;border-radius:14px"></div>
<div class="a s" style="left:38px;top:464px;font-size:7px;color:#2a5540;letter-spacing:.5px">Big Sale Products</div>
<div class="a" style="left:38px;top:491px;font-size:8px;line-height:14px;color:#222">Indoor<br>Plants</div>
<div class="a" style="left:38px;top:567px;font-size:4.5px;color:#333;text-decoration:underline;font-weight:bold;letter-spacing:.5px">SHOP NOW</div>
<svg class="a" style="left:82px;top:494px" width="105" height="109" viewBox="0 0 100 100" preserveAspectRatio="none"><use href="#jade"/></svg>
<div class="card" style="left:196px;top:450px;width:162px;height:153px;border-radius:14px"></div>
<div class="a s" style="left:211px;top:464px;font-size:7px;color:#2a5540;letter-spacing:.5px">Top Products</div>
<div class="a" style="left:211px;top:491px;font-size:8px;line-height:14px;color:#222">Herbal<br>Plants</div>
<div class="a" style="left:211px;top:567px;font-size:4.5px;color:#333;text-decoration:underline;font-weight:bold;letter-spacing:.5px">SHOP NOW</div>
<svg class="a" style="left:250px;top:488px" width="110" height="115" viewBox="0 0 100 100" preserveAspectRatio="none"><use href="#herb"/></svg>
<div class="a s c" style="left:0;top:645px;width:376px;font-size:19px;color:#0d3b24;letter-spacing:.5px">Our Products</div>
<div class="a" style="left:136px;top:675px;width:93px;height:1px;background:#5fa56b"></div>
<div class="pill" style="left:33px;top:688px;width:78px;height:21px;line-height:18px;font-size:5px;background:#0d3b24;color:#fff">WHAT'S NEW</div>
<div class="pill" style="left:125px;top:688px;width:87px;height:21px;line-height:18px;font-size:5px">BEST SELLERS</div>
<div class="pill" style="left:227px;top:688px;width:122px;height:21px;line-height:18px;font-size:5px">CUSTOMER FAVORITES</div>
<div class="card" style="left:30px;top:728px;width:151px;height:150px;border-radius:16px"></div>
<svg class="a" style="left:52px;top:738px" width="105" height="130" viewBox="0 0 100 100"><use href="#homal"/></svg>
<div class="card" style="left:195px;top:728px;width:151px;height:150px;border-radius:16px;background:#76bd7f"></div>
<svg class="a" style="left:218px;top:738px" width="105" height="130" viewBox="0 0 100 100"><use href="#lic"/></svg>
<div class="a" style="left:40px;top:888px;font-size:8px;color:#c8704d;font-weight:bold;letter-spacing:.8px">$4.00</div>
<div class="a" style="left:209px;top:888px;font-size:8px;color:#c8704d;font-weight:bold;letter-spacing:.8px">$4.00</div>
<div class="card" style="left:32px;top:910px;width:153px;height:151px;border-radius:16px"></div>
<svg class="a" style="left:50px;top:918px" width="115" height="135" viewBox="0 0 100 100"><use href="#fig"/></svg>
<div class="card" style="left:197px;top:910px;width:153px;height:151px;border-radius:16px"></div>
<svg class="a" style="left:216px;top:918px" width="115" height="135" viewBox="0 0 100 100"><use href="#homal"/></svg>
<div class="a" style="left:40px;top:1069px;font-size:6px;color:#222;letter-spacing:.4px">Fiddle Leaf Fig</div>
<div class="a" style="left:212px;top:1069px;font-size:6px;color:#222;letter-spacing:.4px">Licuala Grandis</div>
<div class="a" style="left:43px;top:1085px;font-size:8px;color:#c8704d;font-weight:bold;letter-spacing:.8px">$4.00</div>
<div class="a" style="left:213px;top:1085px;font-size:8px;color:#c8704d;font-weight:bold;letter-spacing:.8px">$4.00</div>
<div class="a" style="left:142px;top:1123px;width:8px;height:6px;border-radius:3px;background:#dcdcd9"></div>
<div class="a" style="left:158px;top:1123px;width:8px;height:6px;border-radius:3px;background:#dcdcd9"></div>
<div class="a" style="left:174px;top:1123px;width:8px;height:6px;border-radius:3px;background:#dcdcd9"></div>
<div class="a" style="left:190px;top:1123px;width:8px;height:6px;border-radius:3px;background:#8aab95"></div>
<div class="a" style="left:206px;top:1123px;width:8px;height:6px;border-radius:3px;background:#dcdcd9"></div>
<div class="a" style="left:222px;top:1123px;width:8px;height:6px;border-radius:3px;background:#dcdcd9"></div>
<div class="a dark" style="left:0;top:1166px;width:376px;height:224px"></div>
<div class="a s w" style="left:24px;top:1193px;font-size:20px;line-height:34px;letter-spacing:1px">Grow Plant For<br>A&nbsp; Better Life</div>
<div class="btn" style="left:24px;top:1284px;width:97px;height:30px;font-size:7px;padding-left:8px">Read More <span class="arr" style="width:17px;height:17px;margin-left:14px;line-height:17px"></span></div>
<div class="a" style="left:219px;top:1240px;width:130px;height:130px;border-radius:50%;background:#ebebea;border:2px solid #0b3322"></div>
<svg class="a" style="left:248px;top:1252px" width="78" height="105" viewBox="0 0 100 100" preserveAspectRatio="none"><g fill="#6aa54a"><ellipse cx="50" cy="15" rx="6" ry="16"/><ellipse cx="32" cy="20" rx="5" ry="15" transform="rotate(-40 32 20)"/><ellipse cx="68" cy="20" rx="5" ry="15" transform="rotate(40 68 20)"/></g><path d="M28 34 L72 34 L70 60 L30 60Z" fill="#e6e4dc"/><path d="M33 60 L30 95 M67 60 L70 95 M42 60 L42 88 M58 60 L58 88" stroke="#c79a62" stroke-width="2.5"/></svg>
<div class="a" style="left:160px;top:1280px;width:85px;height:85px;border-radius:50%;background:#eeeeec;border:3px solid #0b3322"></div>
<svg class="a" style="left:180px;top:1290px" width="45" height="62" viewBox="0 0 100 100" preserveAspectRatio="none"><g fill="#3f7a2a"><ellipse cx="50" cy="20" rx="8" ry="20"/><ellipse cx="30" cy="28" rx="6" ry="18" transform="rotate(-35 30 28)"/><ellipse cx="70" cy="28" rx="6" ry="18" transform="rotate(35 70 28)"/></g><rect x="32" y="45" width="36" height="30" fill="#222"/><path d="M34 75 L30 98 M66 75 L70 98" stroke="#6a3a22" stroke-width="3"/></svg>
<div class="a s c" style="left:0;top:1439px;width:376px;font-size:13.5px;color:#1f5a3a;letter-spacing:.3px">Steps to start taking care of your plants</div>
<div class="a c" style="left:0;top:1467px;width:376px;font-size:7.5px;color:#222;letter-spacing:.5px">The right solution for the care of green and smart plants</div>
<div class="a" style="left:43px;top:1534px;width:70px;height:70px;border-radius:50%;background:#0b3322"></div>
<svg class="a" style="left:68px;top:1556px" width="20" height="26" viewBox="0 0 24 30" fill="none" stroke="#fff" stroke-width="1.4"><path d="M12 2 C8 9 3 14 3 20 C3 25 7 28 12 28 C17 28 21 25 21 20 C21 14 16 9 12 2Z"/><path d="M7 20 C7 23 9 25 12 25"/></svg>
<div class="a" style="left:44px;top:1650px;width:70px;height:68px;border-radius:50%;background:#0b3322"></div>
<svg class="a" style="left:70px;top:1670px" width="20" height="26" viewBox="0 0 24 30" fill="none" stroke="#fff" stroke-width="1.3"><rect x="4" y="2" width="5" height="5"/><path d="M3 9 L11 9 L13 13 L13 28 L1 28 L1 13Z"/><circle cx="7" cy="19" r="3.5"/><path d="M5 21 L9 17"/><circle cx="15" cy="3" r=".9" fill="#fff"/><circle cx="18" cy="5" r=".9" fill="#fff"/><circle cx="20" cy="2" r=".9" fill="#fff"/></svg>
<div class="a" style="left:47px;top:1776px;width:72px;height:68px;border-radius:50%;background:#0b3322"></div>
<svg class="a" style="left:66px;top:1797px" width="32" height="26" viewBox="0 0 32 26" fill="none" stroke="#fff" stroke-width="1.4"><circle cx="5" cy="11" r="3"/><circle cx="10" cy="21" r="3"/><path d="M8 12 L30 4 M12 19 L28 8 L14 14"/></svg>
<div class="a" style="left:133px;top:1529px;font-size:11px;font-weight:bold;letter-spacing:1.3px;color:#111">Humidity Control</div>
<div class="a" style="left:133px;top:1550px;font-size:8px;line-height:12.7px;color:#222;letter-spacing:.5px">Effective humidity control is<br>essential for properly caring for<br>plants,&nbsp; ensuring optimal growth<br>and overall health.</div>
<div class="a" style="left:134px;top:1650px;font-size:11px;font-weight:bold;letter-spacing:1.3px;color:#111">Pest Anticipation</div>
<div class="a" style="left:134px;top:1669px;font-size:8px;line-height:12.7px;color:#222;letter-spacing:.5px">Implementing proactive pest<br>anticipation&nbsp; measures is essential<br>to safeguard and nurture the well-<br>being of plants.</div>
<div class="a" style="left:136px;top:1778px;font-size:11px;font-weight:bold;letter-spacing:1.3px;color:#111">Pruning Weeds</div>
<div class="a" style="left:136px;top:1797px;font-size:8px;line-height:15px;color:#222;letter-spacing:.5px">Taking care of plants involves<br>diligently managing unwanted<br>growth to ensure their well-being.</div>
<div class="card" style="left:30px;top:1872px;width:328px;height:478px;border-radius:18px"></div>
<svg class="a" style="left:30px;top:1872px;border-radius:18px 18px 0 0" width="328" height="246"><use href="#mon" width="328" height="246"/></svg>
<div class="a" style="left:54px;top:2137px;font-size:10.5px;line-height:21px;font-weight:bold;color:#0d3b24;letter-spacing:1.2px">Come with us how to grow your plants<br>to be better and healthier</div>
<div class="a" style="left:54px;top:2193px;font-size:6.7px;line-height:15.7px;color:#333;letter-spacing:.4px">Join us on a journey to learn the art of growing healthier and<br>more vibrant plants. We're here to share tips and insights that<br>will help you nurture your garden to its fullest potential. Come<br>along with us, and let's explore the simple yet effective ways to<br>make your plants thrive, naturally.</div>
<div class="btn" style="left:57px;top:2285px;width:135px;height:33px;font-size:8px;padding-left:14px;letter-spacing:1.5px">Read More <span class="arr" style="width:19px;height:19px;margin-left:24px;line-height:19px"></span></div>
<div class="a" style="left:0;top:2426px;width:376px;height:440px;background:#dcdcd9"></div>
<div class="a s c" style="left:0;top:2466px;width:376px;font-size:15px;color:#0d3b24;letter-spacing:.5px">Follow us on Instagram</div>
<svg class="a" style="left:36px;top:2524px;border-radius:14px" width="149" height="146"><use href="#ig1" width="149" height="146"/></svg>
<svg class="a" style="left:201px;top:2524px;border-radius:14px" width="149" height="146"><use href="#ig2" width="149" height="146"/></svg>
<svg class="a" style="left:38px;top:2685px;border-radius:14px" width="149" height="150"><use href="#ig3" width="149" height="150"/></svg>
<svg class="a" style="left:202px;top:2685px;border-radius:14px" width="149" height="150"><use href="#ig4" width="149" height="150"/></svg>
<div class="a dark" style="left:0;top:2866px;width:376px;height:662px"></div>
<div class="a s w" style="left:40px;top:2920px;font-size:13px;line-height:22px;letter-spacing:1.3px">Stay In The Loop With Special Offers,<br>Plant Parenting Tips, &amp; More.</div>
<div class="a" style="left:44px;top:2983px;width:230px;height:42px;background:#2e5140;color:#5f7f6c;font-size:9px;line-height:42px;padding-left:18px;letter-spacing:1px">Enter your Email</div>
<div class="a" style="left:282px;top:2983px;width:47px;height:42px;background:#c8704d"></div>
<svg class="a" style="left:293px;top:2993px" width="25" height="22" viewBox="0 0 22 20"><path d="M1 8 L21 1 L14 19 L10 11Z" fill="#fff"/><path d="M10 11 L21 1" stroke="#c8704d" stroke-width="1.3"/></svg>
<div class="hr" style="left:12px;top:3075px;width:348px;background:#8fa89a"></div>
<div class="a w c" style="left:0;top:3089px;width:376px;font-size:9px;letter-spacing:1px">123 Hello Street, CA 8034 , LA</div>
<div class="a w c" style="left:0;top:3118px;width:376px;font-size:9px;line-height:13px;letter-spacing:1px">+63976852918<br>plants.ave@gmail.com</div>
<div class="hr" style="left:54px;top:3180px;width:262px;background:#8fa89a"></div>
<div class="a w c" style="left:0;top:3210px;width:376px;font-size:13px;font-weight:bold;letter-spacing:2px">Plants Avenue</div>
<div class="a w c" style="left:0;top:3242px;width:376px;font-size:7.5px;line-height:11px;letter-spacing:.6px">Caring for plants enhances your space with life.<br>Whether it's a small herb garden or thriving jungle,<br>nurturing your plants rewards you with<br>greenery and serenity.</div>
<svg class="a" style="left:134px;top:3326px" width="104" height="19" viewBox="0 0 104 19"><circle cx="11" cy="9.5" r="9" fill="#fff"/><path d="M12.5 18.5 L12.5 10.5 L15 10.5 L15.5 8 L12.5 8 L12.5 6.5 C12.5 5.5 13 5 14 5 L15.6 5 L15.6 3 C14.8 2.9 14 2.8 13.3 2.8 C11 2.8 9.8 4.2 9.8 6.5 L9.8 8 L7.5 8 L7.5 10.5 L9.8 10.5 L9.8 18.5Z" fill="#0b3322"/><rect x="44" y="2" width="15" height="15" rx="4.5" fill="none" stroke="#fff" stroke-width="1.8"/><circle cx="51.5" cy="9.5" r="3.3" fill="none" stroke="#fff" stroke-width="1.8"/><rect x="80" y="3" width="24" height="14" rx="3" fill="#fff"/><path d="M89 6.5 L89 13.5 L95 10Z" fill="#0b3322"/></svg>
<div class="hr" style="left:54px;top:3379px;width:262px;background:#8fa89a"></div>
<div class="a w" style="left:62px;top:3411px;font-size:8px;font-weight:bold;letter-spacing:1.2px">Home</div>
<div class="a w" style="left:124px;top:3411px;font-size:8px;font-weight:bold;letter-spacing:1.2px">Shop</div>
<div class="a w" style="left:173px;top:3411px;font-size:8px;font-weight:bold;letter-spacing:1.2px">Sale</div>
<div class="a w" style="left:219px;top:3411px;font-size:8px;font-weight:bold;letter-spacing:1.2px">Blog</div>
<div class="a w" style="left:279px;top:3411px;font-size:8px;font-weight:bold;letter-spacing:1.2px">About</div>
<div class="hr" style="left:14px;top:3456px;width:348px;background:#8fa89a"></div>
<div class="a c" style="left:0;top:3477px;width:376px;font-size:5.5px;line-height:10px;color:#c9d3cc;letter-spacing:1.2px">© 2023 PLANTS AVENUE | ALL RIGHTS RESERVED<br>DESIGN BY LA</div>
</div>
</body></html>
